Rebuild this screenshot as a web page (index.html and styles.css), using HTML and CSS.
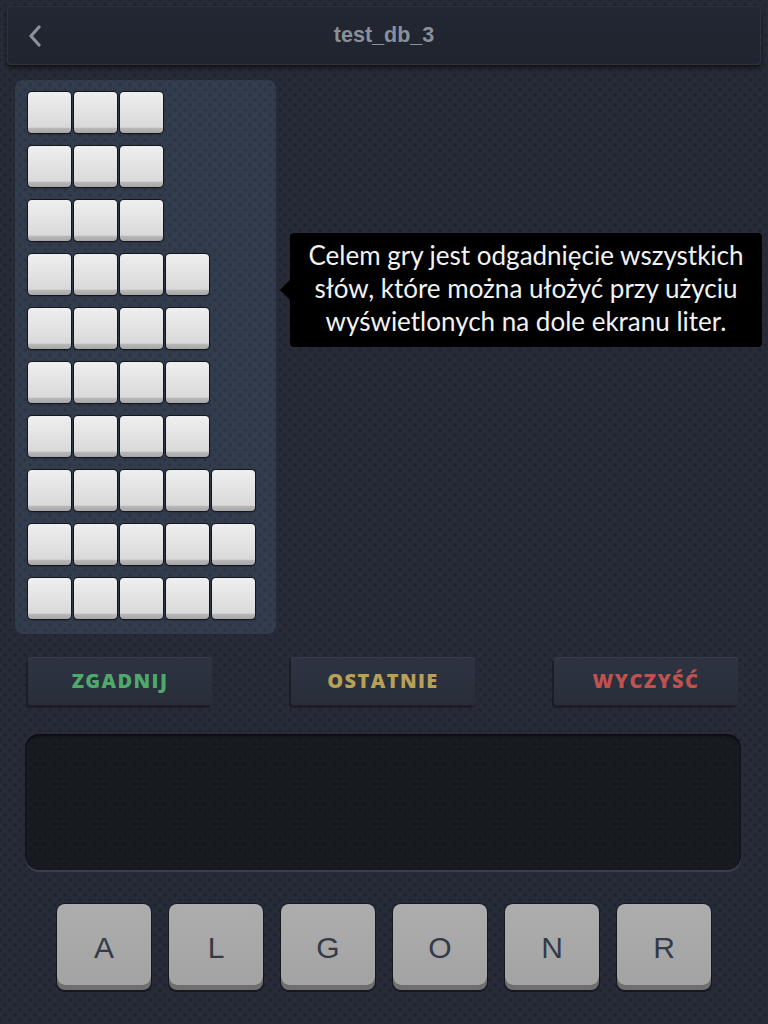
FILE: index.html
```html
<!DOCTYPE html>
<html lang="pl">
<head>
<meta charset="utf-8">
<title>test_db_3</title>
<link rel="stylesheet" href="styles.css">
</head>
<body>
<div class="screen">
  <header class="topbar">
    <svg class="back" width="14" height="22" viewBox="0 0 14 22"><polyline points="11,2 3,11 11,20" fill="none" stroke="#8b909a" stroke-width="3.2" stroke-linecap="round" stroke-linejoin="round"/></svg>
    <h1 class="title">test_db_3</h1>
  </header>

  <main class="board">
    <section class="words">
      <div class="row"><span class="tile"></span><span class="tile"></span><span class="tile"></span></div>
      <div class="row"><span class="tile"></span><span class="tile"></span><span class="tile"></span></div>
      <div class="row"><span class="tile"></span><span class="tile"></span><span class="tile"></span></div>
      <div class="row"><span class="tile"></span><span class="tile"></span><span class="tile"></span><span class="tile"></span></div>
      <div class="row"><span class="tile"></span><span class="tile"></span><span class="tile"></span><span class="tile"></span></div>
      <div class="row"><span class="tile"></span><span class="tile"></span><span class="tile"></span><span class="tile"></span></div>
      <div class="row"><span class="tile"></span><span class="tile"></span><span class="tile"></span><span class="tile"></span></div>
      <div class="row"><span class="tile"></span><span class="tile"></span><span class="tile"></span><span class="tile"></span><span class="tile"></span></div>
      <div class="row"><span class="tile"></span><span class="tile"></span><span class="tile"></span><span class="tile"></span><span class="tile"></span></div>
      <div class="row"><span class="tile"></span><span class="tile"></span><span class="tile"></span><span class="tile"></span><span class="tile"></span></div>
    </section>
    <div class="tip">Celem gry jest odgadnięcie wszystkich<br>słów, które można ułożyć przy użyciu<br>wyświetlonych na dole ekranu liter.</div>
  </main>

  <nav class="actions">
    <button class="btn btn-guess">ZGADNIJ</button>
    <button class="btn btn-last">OSTATNIE</button>
    <button class="btn btn-clear">WYCZYŚĆ</button>
  </nav>

  <div class="entry"></div>

  <div class="keys">
    <button class="key">A</button>
    <button class="key">L</button>
    <button class="key">G</button>
    <button class="key">O</button>
    <button class="key">N</button>
    <button class="key">R</button>
  </div>
</div>
</body>
</html>
```

FILE: styles.css
```css
* { box-sizing: border-box; }

html, body {
  margin: 0;
  padding: 0;
}

body {
  width: 768px;
  height: 1024px;
  overflow: hidden;
  background-color: #262b37;
  background-image:
    radial-gradient(circle, rgba(0,0,0,0.18) 1.3px, transparent 1.9px),
    radial-gradient(circle, rgba(0,0,0,0.18) 1.3px, transparent 1.9px);
  background-size: 10px 10px, 10px 10px;
  background-position: 0 0, 5px 5px;
  font-family: "Liberation Sans", Arial, sans-serif;
}

.screen {
  display: flex;
  flex-direction: column;
  height: 1024px;
}

/* Header */
.topbar {
  position: relative;
  margin: 6px 7px 0 7px;
  height: 59px;
  background: linear-gradient(#232733, #20242e);
  border: 1px solid #2d323d;
  border-radius: 4px;
  box-shadow: 0 3px 4px rgba(0,0,0,0.55);
  display: flex;
  align-items: center;
  justify-content: center;
}

.back {
  position: absolute;
  left: 20px;
  top: 18px;
}

.title {
  margin: 0;
  font-size: 21.5px;
  font-weight: bold;
  color: #8b909a;
}

/* Board */
.board {
  display: flex;
  align-items: flex-start;
  margin: 15px 0 0 15px;
}

.words {
  width: 261px;
  height: 554px;
  background-color: #333c4d;
  background-image:
    radial-gradient(circle, rgba(0,0,0,0.14) 1.3px, transparent 1.9px),
    radial-gradient(circle, rgba(0,0,0,0.14) 1.3px, transparent 1.9px);
  background-size: 10px 10px, 10px 10px;
  background-position: 0 0, 5px 5px;
  border-radius: 8px;
  padding: 12px 0 0 13px;
  display: flex;
  flex-direction: column;
  gap: 13px;
}

.row {
  display: flex;
  gap: 3px;
}

.tile {
  display: block;
  width: 43px;
  height: 41px;
  border-radius: 4px;
  background: linear-gradient(#efefef, #d9d9d9 86%, #b9b9b9 88%, #a6a6a6 100%);
  box-shadow: 0 0 0 1px #13161c, 0 1px 2px rgba(0,0,0,0.5);
}

/* Tooltip */
.tip {
  position: relative;
  margin: 153px 0 0 14px;
  width: 472px;
  height: 114px;
  background: #000;
  border-radius: 4px;
  color: #f2f2f2;
  font-family: "Lato", "Noto Sans", sans-serif;
  font-size: 26px;
  line-height: 33px;
  text-align: center;
  padding-top: 6px;
}

.tip::before {
  content: "";
  position: absolute;
  left: -10px;
  top: 47px;
  border-top: 10px solid transparent;
  border-bottom: 10px solid transparent;
  border-right: 10px solid #000;
}

/* Action buttons */
.actions {
  display: flex;
  justify-content: space-between;
  padding: 0 30px 0 28px;
  margin-top: 23px;
}

.btn {
  width: 184px;
  height: 48px;
  border: none;
  border-radius: 3px;
  background: linear-gradient(#2e3442, #282d39);
  box-shadow: -2px 3px 0 #1b1e26, 0 1px 0 #363c4a inset;
  font-family: "Open Sans", "Liberation Sans", sans-serif;
  font-weight: 800;
  font-size: 20px;
  letter-spacing: 1.4px;
  padding: 0 0 2px 0;
}

.btn-guess { color: #4ea96b; }
.btn-last  { color: #b7a058; }
.btn-clear { color: #bf5150; }

/* Entry area */
.entry {
  margin: 29px 0 0 25px;
  width: 716px;
  height: 136px;
  border-radius: 14px;
  background-color: #181b21;
  background-image:
    radial-gradient(circle, rgba(0,0,0,0.16) 1.3px, transparent 1.9px),
    radial-gradient(circle, rgba(0,0,0,0.16) 1.3px, transparent 1.9px);
  background-size: 10px 10px, 10px 10px;
  background-position: 0 0, 5px 5px;
  box-shadow: 0 2px 0 #3a3f4a, inset 0 2px 3px rgba(0,0,0,0.6);
}

/* Letter keys */
.keys {
  display: flex;
  justify-content: center;
  gap: 18px;
  margin-top: 34px;
}

.key {
  width: 94px;
  height: 81px;
  border: none;
  border-radius: 8px;
  background: linear-gradient(#adadad, #a3a3a3);
  box-shadow: 0 5px 0 #6f6f6f, 0 0 0 1px #15181e, 0 6px 0 1px #15181e;
  color: #343b47;
  font-family: "Liberation Sans", Arial, sans-serif;
  font-size: 30px;
  padding: 6px 0 0 0;
}
```
